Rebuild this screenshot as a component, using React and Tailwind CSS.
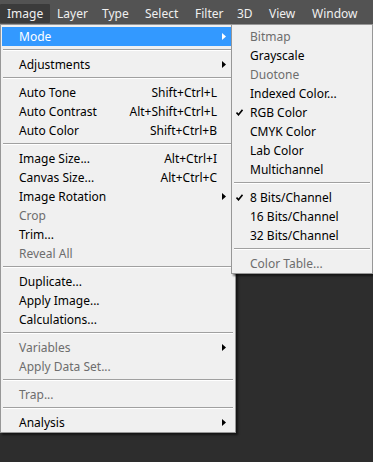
const bar = [
  { label: 'Image', w: 'w-[50px]', active: true },
  { label: 'Layer', w: 'w-[45px]' },
  { label: 'Type', w: 'w-[43px]' },
  { label: 'Select', w: 'w-[50px]' },
  { label: 'Filter', w: 'w-[42px]' },
  { label: '3D', w: 'w-[32px]' },
  { label: 'View', w: 'w-[43px]' },
  { label: 'Window', w: 'w-[61px]' },
];

// null = separator
const mainItems = [
  { label: 'Mode', sub: true, active: true },
  null,
  { label: 'Adjustments', sub: true },
  null,
  { label: 'Auto Tone', key: 'Shift+Ctrl+L' },
  { label: 'Auto Contrast', key: 'Alt+Shift+Ctrl+L' },
  { label: 'Auto Color', key: 'Shift+Ctrl+B' },
  null,
  { label: 'Image Size...', key: 'Alt+Ctrl+I' },
  { label: 'Canvas Size...', key: 'Alt+Ctrl+C' },
  { label: 'Image Rotation', sub: true },
  { label: 'Crop', off: true },
  { label: 'Trim...' },
  { label: 'Reveal All', off: true },
  null,
  { label: 'Duplicate...' },
  { label: 'Apply Image...' },
  { label: 'Calculations...' },
  null,
  { label: 'Variables', sub: true, off: true },
  { label: 'Apply Data Set...', off: true },
  null,
  { label: 'Trap...', off: true },
  null,
  { label: 'Analysis', sub: true },
];

const modeItems = [
  { label: 'Bitmap', off: true },
  { label: 'Grayscale' },
  { label: 'Duotone', off: true },
  { label: 'Indexed Color...' },
  { label: 'RGB Color', checked: true },
  { label: 'CMYK Color' },
  { label: 'Lab Color' },
  { label: 'Multichannel' },
  null,
  { label: '8 Bits/Channel', checked: true },
  { label: '16 Bits/Channel' },
  { label: '32 Bits/Channel' },
  null,
  { label: 'Color Table...', off: true },
];

function Arrow({ white }) {
  return (
    <svg width="4" height="7" viewBox="0 0 4 7" className="block">
      <path d="M0 0 L4 3.5 L0 7 Z" fill={white ? '#ffffff' : '#000000'} />
    </svg>
  );
}

function Check() {
  return (
    <svg width="7" height="7" viewBox="0 0 7 7" className="block">
      <path d="M0.5 3.5 L2.5 5.8 L6.5 0.8" stroke="#000" strokeWidth="1.6" fill="none" />
    </svg>
  );
}

function Separator() {
  return (
    <div className="h-[9px] px-[1px] pt-[3px]">
      <div className="h-px bg-[#a0a0a0]" />
      <div className="h-px bg-white" />
    </div>
  );
}

export default function App() {
  return (
    <div
      className="relative w-[373px] h-[462px] overflow-hidden bg-[#2d2d2d] text-[12px]"
      style={{ fontFamily: '"Noto Sans", Arial, sans-serif' }}
    >
      <div className="flex h-6 bg-[#535353] pt-[4px] text-[#f0f0f0]">
        {bar.map((b) => (
          <div
            key={b.label}
            className={`${b.w} h-[19px] flex items-center pl-[7px] leading-none ${b.active ? 'bg-[#3b3b3b] rounded-[1px]' : ''}`}
          >
            {b.label}
          </div>
        ))}
      </div>

      {/* Image menu */}
      <div className="absolute left-0 top-[24px] w-[236px] bg-[#f0f0f0] border border-[#979797] px-[1px] pt-[2px] pb-0 shadow-[2px_2px_2px_rgba(0,0,0,0.55)]">
        {mainItems.map((it, i) =>
          it ? (
            <div
              key={i}
              className={`h-[19px] flex items-center pl-[17px] ${it.active ? 'bg-[#3399ff] text-white' : it.off ? 'text-[#6d6d6d]' : 'text-black'}`}
            >
              <div className="flex-1 whitespace-nowrap">{it.label}</div>
              {it.key && <div className="whitespace-nowrap">{it.key}</div>}
              <div className="w-[17px] pl-[5px] flex items-center">
                {it.sub && <Arrow white={it.active} />}
              </div>
            </div>
          ) : (
            <Separator key={i} />
          )
        )}
      </div>

      {/* Mode submenu */}
      <div className="absolute left-[231px] top-[24px] w-[142px] bg-[#f0f0f0] border border-[#979797] px-[1px] pt-[2px] pb-0 shadow-[2px_2px_2px_rgba(0,0,0,0.55)]">
        {modeItems.map((it, i) =>
          it ? (
            <div
              key={i}
              className={`h-[19px] flex items-center ${it.off ? 'text-[#6d6d6d]' : 'text-black'}`}
            >
              <div className="w-[17px] pl-[3px]">{it.checked && <Check />}</div>
              <div className="whitespace-nowrap">{it.label}</div>
            </div>
          ) : (
            <Separator key={i} />
          )
        )}
      </div>
    </div>
  );
}
